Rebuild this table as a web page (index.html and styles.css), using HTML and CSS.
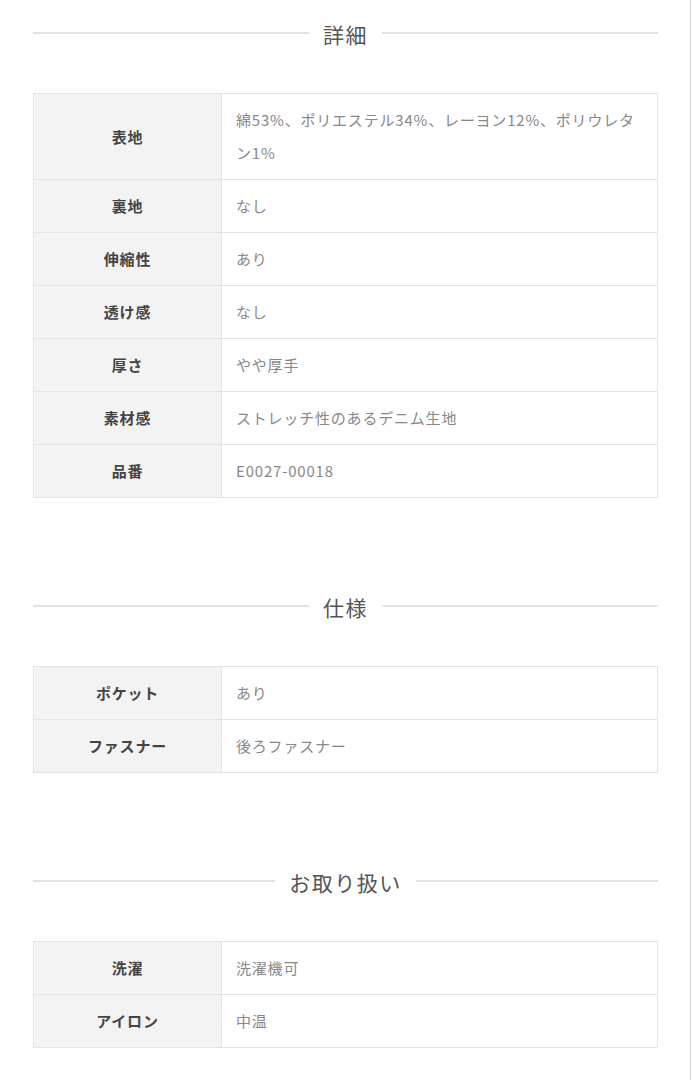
FILE: index.html
```html
<!DOCTYPE html>
<html lang="ja">
<head>
    <meta charset="UTF-8">
    <meta name="viewport" content="width=device-width, initial-scale=1.0">
    <title>商品詳細</title>
    <link rel="stylesheet" href="styles.css">
</head>
<body>
    <div class="page">
        <section class="spec-section">
            <h2 class="spec-title"><span>詳細</span></h2>
            <table class="spec-table">
                <tr><th>表地</th><td>綿53%、ポリエステル34%、レーヨン12%、ポリウレタン1%</td></tr>
                <tr><th>裏地</th><td>なし</td></tr>
                <tr><th>伸縮性</th><td>あり</td></tr>
                <tr><th>透け感</th><td>なし</td></tr>
                <tr><th>厚さ</th><td>やや厚手</td></tr>
                <tr><th>素材感</th><td>ストレッチ性のあるデニム生地</td></tr>
                <tr><th>品番</th><td>E0027-00018</td></tr>
            </table>
        </section>

        <section class="spec-section">
            <h2 class="spec-title"><span>仕様</span></h2>
            <table class="spec-table">
                <tr><th>ポケット</th><td>あり</td></tr>
                <tr><th>ファスナー</th><td>後ろファスナー</td></tr>
            </table>
        </section>

        <section class="spec-section">
            <h2 class="spec-title"><span>お取り扱い</span></h2>
            <table class="spec-table">
                <tr><th>洗濯</th><td>洗濯機可</td></tr>
                <tr><th>アイロン</th><td>中温</td></tr>
            </table>
        </section>
    </div>
</body>
</html>
```

FILE: styles.css
```css
body {
    margin: 0;
    background-color: #fff;
    font-family: "Noto Sans CJK JP", "Noto Sans", sans-serif;
    color: #444;
}
.page {
    box-sizing: border-box;
    width: 691px;
    min-height: 1080px;
    padding: 15px 32px 0 33px;
    border-right: 1px solid #d2d2d2;
}
.spec-section {
    margin-bottom: 90px;
}
.spec-title {
    display: flex;
    align-items: center;
    gap: 14px;
    margin: 0 0 40px;
    font-size: 21px;
    font-weight: normal;
    line-height: 38px;
    letter-spacing: 1.5px;
    color: #555;
}
.spec-title::before,
.spec-title::after {
    content: "";
    flex: 1;
    height: 2px;
    background-color: #e2e2e2;
    margin-top: -3px;
}
.spec-table {
    width: 100%;
    border-collapse: collapse;
    font-size: 15px;
    line-height: 33px;
    letter-spacing: 0.8px;
}
.spec-table th,
.spec-table td {
    border: 1px solid #e4e4e4;
    padding: 9px 15px 10px;
    vertical-align: middle;
}
.spec-table th {
    width: 157px;
    background-color: #f3f3f3;
    font-weight: bold;
    color: #444;
    text-align: center;
}
.spec-table td {
    color: #888;
    text-align: left;
    padding-left: 14px;
    padding-right: 15px;
}
```
